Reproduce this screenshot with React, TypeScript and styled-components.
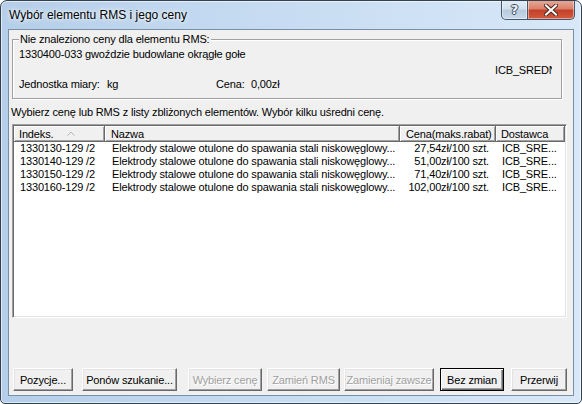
import React from 'react';
import styled, { createGlobalStyle } from 'styled-components';

const GlobalStyle = createGlobalStyle`
  html, body {
    margin: 0;
    padding: 0;
    background: #ffffff;
  }
  body {
    font-family: "Liberation Sans", Arial, sans-serif;
    font-size: 11px;
    letter-spacing: -0.15px;
    color: #000;
  }
`;

const Window = styled.div`
  width: 582px;
  height: 404px;
  box-sizing: border-box;
  border: 1px solid #33414f;
  border-radius: 7px 7px 5px 5px;
  background: linear-gradient(90deg, #b5cee9 0%, #c4daf1 40%, #d8e8f8 100%);
  box-shadow: inset 0 0 0 1px rgba(255, 255, 255, 0.6);
  display: flex;
  flex-direction: column;
  overflow: hidden;
`;

const TitleBar = styled.div`
  height: 28px;
  display: flex;
  justify-content: space-between;
  align-items: flex-start;
  padding-left: 8px;
`;

const Title = styled.div`
  margin-top: 7px;
  font-size: 12px;
  line-height: 15px;
  letter-spacing: 0;
  color: #000;
  text-shadow: 0 0 6px rgba(255, 255, 255, 0.95), 0 0 3px rgba(255, 255, 255, 0.9);
`;

const CaptionButtons = styled.div`
  display: flex;
  margin-top: -1px;
  margin-right: 6px;
`;

const CaptionButton = styled.div<{ $close?: boolean }>`
  width: ${(p) => (p.$close ? 47 : 27)}px;
  height: 20px;
  box-sizing: border-box;
  border: 1px solid #46566a;
  border-top: none;
  border-left-width: ${(p) => (p.$close ? 0 : 1)}px;
  border-radius: ${(p) => (p.$close ? '0 0 5px 0' : '0 0 0 5px')};
  background: ${(p) =>
    p.$close
      ? 'linear-gradient(180deg, #e9aa9a 0%, #d9826c 45%, #c4402a 55%, #d45a3e 100%)'
      : 'linear-gradient(180deg, #e4edf7 0%, #d3e0ee 45%, #b8cade 55%, #c9d9ea 100%)'};
  box-shadow: inset 0 0 0 1px rgba(255, 255, 255, 0.45);
  display: flex;
  align-items: center;
  justify-content: center;
`;

const HelpGlyph = styled.span`
  font-family: "DejaVu Sans", sans-serif;
  font-weight: bold;
  font-size: 13px;
  line-height: 13px;
  color: #eef3f9;
  text-shadow: -1px 0 #3a4a5c, 1px 0 #3a4a5c, 0 -1px #3a4a5c, 0 1px #3a4a5c;
  margin-top: -1px;
`;

const Body = styled.div`
  flex: 1;
  display: flex;
  padding: 0 7px 7px 7px;
`;

const Client = styled.div`
  flex: 1;
  display: flex;
  flex-direction: column;
  border: 1px solid #7a8ea4;
  background: #f0f0f0;
`;

const GroupBox = styled.div`
  position: relative;
  box-sizing: border-box;
  height: 60px;
  margin: 9px 11px 0 3px;
  border: 1px solid #a0a0a0;
  box-shadow: inset 1px 1px #ffffff, 1px 1px #ffffff;
  display: flex;
  flex-direction: column;
`;

const GroupCaption = styled.div`
  position: absolute;
  top: -7px;
  left: 6px;
  padding: 0 1px;
  line-height: 13px;
  background: #f0f0f0;
`;

const GroupLine = styled.div<{ $top: number; $left?: number }>`
  margin-top: ${(p) => p.$top}px;
  margin-left: ${(p) => p.$left ?? 6}px;
  line-height: 13px;
  height: 13px;
  white-space: nowrap;
  display: flex;
`;

const Clip = styled.div<{ $w: number }>`
  width: ${(p) => p.$w}px;
  overflow: hidden;
  white-space: nowrap;
`;

const Hint = styled.div`
  margin: 7px 0 0 2px;
  line-height: 13px;
  white-space: nowrap;
`;

const ListView = styled.div`
  margin: 5px 0 0 3px;
  width: 555px;
  height: 194px;
  box-sizing: border-box;
  border: 1px solid;
  border-color: #a0a0a0 #ffffff #ffffff #a0a0a0;
  box-shadow: inset 1px 1px #696969, inset -1px -1px #e3e3e3;
  padding: 1px;
  background: #ffffff;
  overflow: hidden;
`;

const Grid = styled.div`
  display: grid;
  grid-template-columns: 91px 295px 96px 69px;
`;

const HeaderCell = styled.div<{ $pad?: number }>`
  height: 16px;
  box-sizing: border-box;
  line-height: 14px;
  padding-left: ${(p) => p.$pad ?? 6}px;
  background: #f0f0f0;
  border-right: 1px solid #696969;
  border-bottom: 1px solid #696969;
  box-shadow: inset 1px 1px #ffffff, inset -1px -1px #a0a0a0;
  white-space: nowrap;
  overflow: hidden;
  display: flex;
  align-items: center;
`;

const Cell = styled.div<{ $right?: boolean; $pad?: number }>`
  height: 13px;
  line-height: 13px;
  white-space: nowrap;
  overflow: hidden;
  text-align: ${(p) => (p.$right ? 'right' : 'left')};
  padding-left: ${(p) => (p.$right ? 0 : p.$pad ?? 6)}px;
  padding-right: ${(p) => (p.$right ? 7 : 0)}px;
`;

const Spacer = styled.div`
  flex: 1;
`;

const ButtonRow = styled.div`
  display: flex;
  margin: 0 0 4px 4px;
`;

const Button = styled.div<{ $w: number; $ml?: number; $disabled?: boolean; $default?: boolean }>`
  width: ${(p) => p.$w}px;
  height: 23px;
  margin-left: ${(p) => p.$ml ?? 0}px;
  box-sizing: border-box;
  display: flex;
  align-items: center;
  justify-content: center;
  background: #f0f0f0;
  white-space: nowrap;
  color: ${(p) => (p.$disabled ? '#a0a0a0' : '#000')};
  text-shadow: ${(p) => (p.$disabled ? '1px 1px #ffffff' : 'none')};
  border: 1px solid;
  border-color: ${(p) => (p.$default ? '#000' : '#ffffff #696969 #696969 #ffffff')};
  box-shadow: ${(p) =>
    p.$default
      ? 'inset 1px 1px #ffffff, inset -1px -1px #696969, inset -2px -2px #a0a0a0'
      : 'inset -1px -1px #a0a0a0, inset 1px 1px #e3e3e3'};
`;

const rows = [
  { idx: '1330130-129 /2', price: '27,54zł/100 szt.' },
  { idx: '1330140-129 /2', price: '51,00zł/100 szt.' },
  { idx: '1330150-129 /2', price: '71,40zł/100 szt.' },
  { idx: '1330160-129 /2', price: '102,00zł/100 szt.' },
];

export default function App() {
  return (
    <>
      <GlobalStyle />
      <Window>
        <TitleBar>
          <Title>Wybór elementu RMS i jego ceny</Title>
          <CaptionButtons>
            <CaptionButton>
              <HelpGlyph>?</HelpGlyph>
            </CaptionButton>
            <CaptionButton $close>
              <svg width="14" height="12" viewBox="0 0 14 12">
                <path d="M2 1.5 L12 10.5 M12 1.5 L2 10.5" stroke="#4a2a22" strokeWidth="4" strokeLinecap="square" />
                <path d="M2 1.5 L12 10.5 M12 1.5 L2 10.5" stroke="#ffffff" strokeWidth="2" strokeLinecap="square" />
              </svg>
            </CaptionButton>
          </CaptionButtons>
        </TitleBar>
        <Body>
          <Client>
            <GroupBox>
              <GroupCaption>Nie znaleziono ceny dla elementu RMS:</GroupCaption>
              <GroupLine $top={8}>1330400-033 gwoździe budowlane okrągłe gołe</GroupLine>
              <GroupLine $top={3} $left={482}>
                <Clip $w={57}>ICB_SREDNIE</Clip>
              </GroupLine>
              <GroupLine $top={1}>
                <Clip $w={88}>Jednostka miary:</Clip>
                <Clip $w={109}>kg</Clip>
                <Clip $w={35}>Cena:</Clip>
                <Clip $w={60}>0,00zł</Clip>
              </GroupLine>
            </GroupBox>
            <Hint>Wybierz cenę lub RMS z listy zbliżonych elementów. Wybór kilku uśredni cenę.</Hint>
            <ListView>
              <Grid>
                <HeaderCell $pad={5}>
                  Indeks.
                  <svg width="8" height="5" viewBox="0 0 8 5" style={{ marginLeft: 14 }}>
                    <path d="M0.5 4.5 L4 1 L7.5 4.5" fill="none" stroke="#b4b4b4" strokeWidth="1" />
                  </svg>
                </HeaderCell>
                <HeaderCell>Nazwa</HeaderCell>
                <HeaderCell>Cena(maks.rabat)</HeaderCell>
                <HeaderCell $pad={5}>Dostawca</HeaderCell>
                {rows.map((r) => (
                  <React.Fragment key={r.idx}>
                    <Cell>{r.idx}</Cell>
                    <Cell $pad={7}>Elektrody stalowe otulone do spawania stali niskowęglowy...</Cell>
                    <Cell $right>{r.price}</Cell>
                    <Cell>ICB_SRE...</Cell>
                  </React.Fragment>
                ))}
              </Grid>
            </ListView>
            <Spacer />
            <ButtonRow>
              <Button $w={60}>Pozycje...</Button>
              <Button $w={95} $ml={9}>Ponów szukanie...</Button>
              <Button $w={74} $ml={11} $disabled>Wybierz cenę</Button>
              <Button $w={73} $ml={5} $disabled>Zamień RMS</Button>
              <Button $w={90} $ml={4} $disabled>Zamieniaj zawsze</Button>
              <Button $w={64} $ml={6} $default>Bez zmian</Button>
              <Button $w={56} $ml={7}>Przerwij</Button>
            </ButtonRow>
          </Client>
        </Body>
      </Window>
    </>
  );
}
